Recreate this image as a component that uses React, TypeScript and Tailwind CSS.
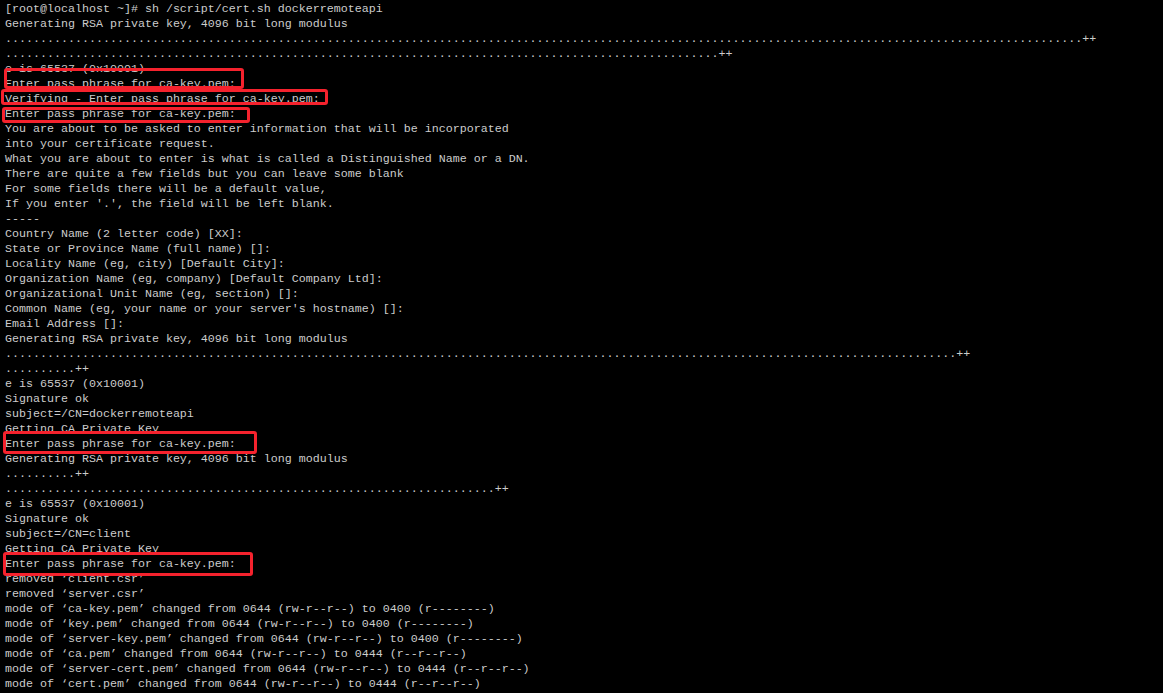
import React from "react";

const dots = (n: number) => ".".repeat(n) + "++";

const lines: string[] = [
  "[root@localhost ~]# sh /script/cert.sh dockerremoteapi",
  "Generating RSA private key, 4096 bit long modulus",
  dots(154),
  dots(102),
  "e is 65537 (0x10001)",
  "Enter pass phrase for ca-key.pem:",
  "Verifying - Enter pass phrase for ca-key.pem:",
  "Enter pass phrase for ca-key.pem:",
  "You are about to be asked to enter information that will be incorporated",
  "into your certificate request.",
  "What you are about to enter is what is called a Distinguished Name or a DN.",
  "There are quite a few fields but you can leave some blank",
  "For some fields there will be a default value,",
  "If you enter '.', the field will be left blank.",
  "-----",
  "Country Name (2 letter code) [XX]:",
  "State or Province Name (full name) []:",
  "Locality Name (eg, city) [Default City]:",
  "Organization Name (eg, company) [Default Company Ltd]:",
  "Organizational Unit Name (eg, section) []:",
  "Common Name (eg, your name or your server's hostname) []:",
  "Email Address []:",
  "Generating RSA private key, 4096 bit long modulus",
  dots(136),
  dots(10),
  "e is 65537 (0x10001)",
  "Signature ok",
  "subject=/CN=dockerremoteapi",
  "Getting CA Private Key",
  "Enter pass phrase for ca-key.pem:",
  "Generating RSA private key, 4096 bit long modulus",
  dots(10),
  dots(70),
  "e is 65537 (0x10001)",
  "Signature ok",
  "subject=/CN=client",
  "Getting CA Private Key",
  "Enter pass phrase for ca-key.pem:",
  "removed \u2018client.csr\u2019",
  "removed \u2018server.csr\u2019",
  "mode of \u2018ca-key.pem\u2019 changed from 0644 (rw-r--r--) to 0400 (r--------)",
  "mode of \u2018key.pem\u2019 changed from 0644 (rw-r--r--) to 0400 (r--------)",
  "mode of \u2018server-key.pem\u2019 changed from 0644 (rw-r--r--) to 0400 (r--------)",
  "mode of \u2018ca.pem\u2019 changed from 0644 (rw-r--r--) to 0444 (r--r--r--)",
  "mode of \u2018server-cert.pem\u2019 changed from 0644 (rw-r--r--) to 0444 (r--r--r--)",
  "mode of \u2018cert.pem\u2019 changed from 0644 (rw-r--r--) to 0444 (r--r--r--)",
];

export default function App() {
  return (
    <div className="relative w-[1163px] h-[693px] overflow-hidden bg-black pl-[5px] pt-[2px] text-[#cccccc] font-['Liberation_Mono',monospace] text-[11.67px]">
      {lines.map((line, i) => (
        <div key={i} className="h-[15px] leading-[15px] whitespace-pre">
          {line}
        </div>
      ))}

      {/* red highlight boxes */}
      <div className="absolute left-[4px] top-[68px] w-[240px] h-[21px] border-[3px] border-[#f5222d] rounded-[3px]" />
      <div className="absolute left-[1px] top-[89px] w-[327px] h-[16px] border-[3px] border-[#f5222d] rounded-[3px]" />
      <div className="absolute left-[2px] top-[107px] w-[248px] h-[16px] border-[3px] border-[#f5222d] rounded-[3px]" />
      <div className="absolute left-[3px] top-[431px] w-[254px] h-[23px] border-[3px] border-[#f5222d] rounded-[3px]" />
      <div className="absolute left-[3px] top-[552px] w-[250px] h-[24px] border-[3px] border-[#f5222d] rounded-[3px]" />
    </div>
  );
}
